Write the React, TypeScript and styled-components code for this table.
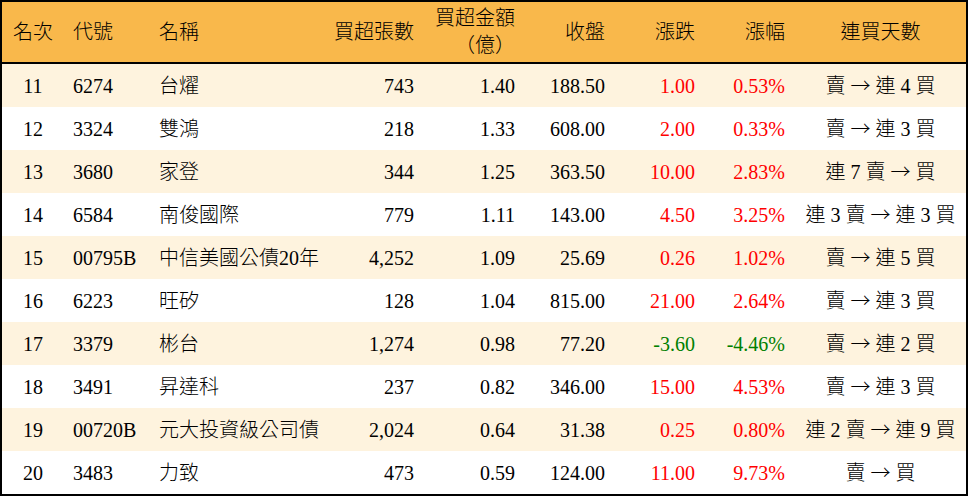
import React from 'react';
import styled, { createGlobalStyle } from 'styled-components';

const GlobalStyle = createGlobalStyle`
  html, body {
    margin: 0;
    padding: 0;
    background: #ffffff;
  }
  body {
    font-family: "Liberation Serif", "Noto Sans CJK TC", serif;
    color: #000000;
  }
`;

const COLUMNS = '62px 86px 180px 94px 101px 90px 90px 90px 1fr';

const TableFrame = styled.div`
  width: 968px;
  height: 496px;
  box-sizing: border-box;
  border: 2px solid #000000;
  display: flex;
  flex-direction: column;
`;

const HeaderRow = styled.div`
  display: grid;
  grid-template-columns: ${COLUMNS};
  height: 60px;
  background: #f9b84b;
  border-bottom: 2px solid #000000;
  align-items: center;
`;

const Row = styled.div<{ $striped: boolean }>`
  display: grid;
  grid-template-columns: ${COLUMNS};
  height: 43px;
  background: ${(p) => (p.$striped ? '#fef3de' : '#ffffff')};
  align-items: center;
`;

type Align = 'left' | 'right' | 'center';

const Cell = styled.div<{ $align: Align; $color?: string }>`
  font-size: 20px;
  line-height: 24px;
  font-weight: 300;
  white-space: nowrap;
  text-align: ${(p) => p.$align};
  padding-left: ${(p) => (p.$align === 'left' ? '9px' : '0')};
  padding-right: ${(p) => (p.$align === 'right' ? '10px' : '0')};
  color: ${(p) => p.$color || '#000000'};
`;

const HeadCell = styled(Cell)`
  line-height: 25px;
`;

const Paren = styled.span`
  font-family: "Noto Sans CJK TC", sans-serif;
  font-weight: 300;
`;

const Arrow = styled.span`
  font-family: "Noto Sans CJK TC", sans-serif;
  font-weight: 300;
  font-size: 20px;
`;

const ALIGNS: Align[] = ['center', 'left', 'left', 'right', 'right', 'right', 'right', 'right', 'center'];

const headers: React.ReactNode[] = [
  '名次',
  '代號',
  '名稱',
  '買超張數',
  <>買超金額<br /><Paren>（億）</Paren></>,
  '收盤',
  '漲跌',
  '漲幅',
  '連買天數',
];

type Item = {
  rank: number;
  code: string;
  name: string;
  lots: string;
  amount: string;
  close: string;
  change: string;
  pct: string;
  from: string;
  to: string;
};

const rows: Item[] = [
  { rank: 11, code: '6274', name: '台燿', lots: '743', amount: '1.40', close: '188.50', change: '1.00', pct: '0.53%', from: '賣', to: '連 4 買' },
  { rank: 12, code: '3324', name: '雙鴻', lots: '218', amount: '1.33', close: '608.00', change: '2.00', pct: '0.33%', from: '賣', to: '連 3 買' },
  { rank: 13, code: '3680', name: '家登', lots: '344', amount: '1.25', close: '363.50', change: '10.00', pct: '2.83%', from: '連 7 賣', to: '買' },
  { rank: 14, code: '6584', name: '南俊國際', lots: '779', amount: '1.11', close: '143.00', change: '4.50', pct: '3.25%', from: '連 3 賣', to: '連 3 買' },
  { rank: 15, code: '00795B', name: '中信美國公債20年', lots: '4,252', amount: '1.09', close: '25.69', change: '0.26', pct: '1.02%', from: '賣', to: '連 5 買' },
  { rank: 16, code: '6223', name: '旺矽', lots: '128', amount: '1.04', close: '815.00', change: '21.00', pct: '2.64%', from: '賣', to: '連 3 買' },
  { rank: 17, code: '3379', name: '彬台', lots: '1,274', amount: '0.98', close: '77.20', change: '-3.60', pct: '-4.46%', from: '賣', to: '連 2 買' },
  { rank: 18, code: '3491', name: '昇達科', lots: '237', amount: '0.82', close: '346.00', change: '15.00', pct: '4.53%', from: '賣', to: '連 3 買' },
  { rank: 19, code: '00720B', name: '元大投資級公司債', lots: '2,024', amount: '0.64', close: '31.38', change: '0.25', pct: '0.80%', from: '連 2 賣', to: '連 9 買' },
  { rank: 20, code: '3483', name: '力致', lots: '473', amount: '0.59', close: '124.00', change: '11.00', pct: '9.73%', from: '賣', to: '買' },
];

const App: React.FC = () => {
  return (
    <>
      <GlobalStyle />
      <TableFrame>
        <HeaderRow>
          {headers.map((h, i) => (
            <HeadCell key={i} $align={ALIGNS[i]}>
              {h}
            </HeadCell>
          ))}
        </HeaderRow>
        {rows.map((r, idx) => {
          const tone = r.change.startsWith('-') ? '#008000' : '#ff0000';
          const values: React.ReactNode[] = [
            String(r.rank),
            r.code,
            r.name,
            r.lots,
            r.amount,
            r.close,
            r.change,
            r.pct,
            <>
              {r.from} <Arrow>→</Arrow> {r.to}
            </>,
          ];
          return (
            <Row key={r.rank} $striped={idx % 2 === 0}>
              {values.map((v, i) => (
                <Cell key={i} $align={ALIGNS[i]} $color={i === 6 || i === 7 ? tone : undefined}>
                  {v}
                </Cell>
              ))}
            </Row>
          );
        })}
      </TableFrame>
    </>
  );
};

export default App;
